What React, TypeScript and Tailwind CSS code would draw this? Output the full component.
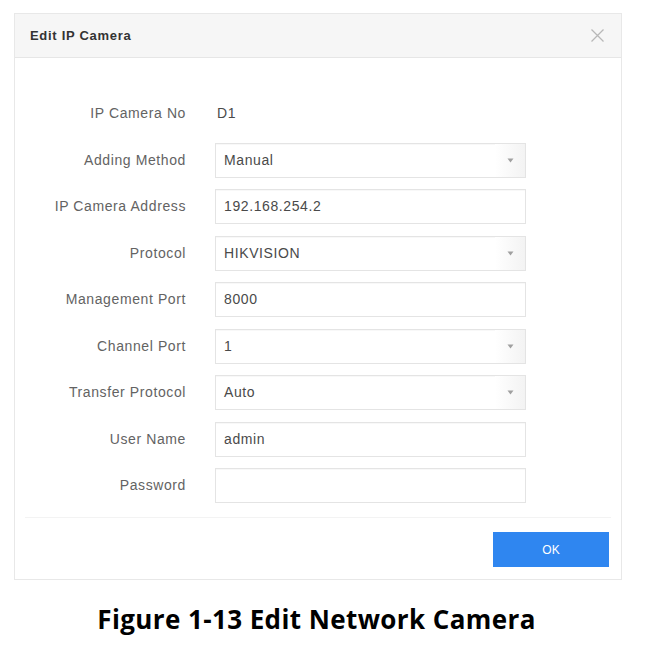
import React from 'react';

type Field = {
  label: string;
  value: string;
  kind: 'text' | 'select' | 'input';
};

const FIELDS: Field[] = [
  { label: 'IP Camera No', value: 'D1', kind: 'text' },
  { label: 'Adding Method', value: 'Manual', kind: 'select' },
  { label: 'IP Camera Address', value: '192.168.254.2', kind: 'input' },
  { label: 'Protocol', value: 'HIKVISION', kind: 'select' },
  { label: 'Management Port', value: '8000', kind: 'input' },
  { label: 'Channel Port', value: '1', kind: 'select' },
  { label: 'Transfer Protocol', value: 'Auto', kind: 'select' },
  { label: 'User Name', value: 'admin', kind: 'input' },
  { label: 'Password', value: '', kind: 'input' },
];

const Caret = () => (
  <svg width="7" height="5" viewBox="0 0 7 5" className="text-[#a0a0a0]">
    <path d="M0.5 0.5 L6.5 0.5 L3.5 4.5 Z" fill="currentColor" />
  </svg>
);

const FieldControl: React.FC<{ field: Field }> = ({ field }) => {
  if (field.kind === 'text') {
    return <span className="text-[#4a4a4a] px-[2px]">{field.value}</span>;
  }
  return (
    <div className="w-[311px] h-[35px] border border-[#e4e4e4] bg-white flex items-center shadow-[inset_0_1px_1px_rgba(0,0,0,0.03)]">
      <span className="flex-1 pl-[8px] text-[#4a4a4a]">{field.value}</span>
      {field.kind === 'select' && (
        <div className="h-full w-[30px] flex items-center justify-center bg-gradient-to-r from-white to-[#f3f3f3]">
          <Caret />
        </div>
      )}
    </div>
  );
};

export default function App() {
  return (
    <div className="w-[650px] h-[647px] bg-white font-['Liberation_Sans',Arial,sans-serif]">
      <div className="pt-[13px] pl-[14px]">
        <div className="w-[608px] border border-[#e8e8e8] bg-white">
          {/* header */}
          <div className="h-[44px] bg-[#f6f6f6] border-b border-[#e6e6e6] flex items-center justify-between pl-[15px] pr-[16px]">
            <span className="text-[13px] font-bold text-[#333] tracking-[0.7px]">Edit IP Camera</span>
            <svg width="15" height="15" viewBox="0 0 15 15">
              <path d="M1.5 1.5 L13.5 13.5 M13.5 1.5 L1.5 13.5" stroke="#b8b8b8" strokeWidth="1.3" />
            </svg>
          </div>

          {/* form */}
          <div className="pt-[38px] flex flex-col gap-[11.5px] text-[14px] tracking-[0.6px]">
            {FIELDS.map((f) => (
              <div key={f.label} className="h-[35px] flex items-center">
                <div className="w-[171px] text-right text-[#636363]">{f.label}</div>
                <div className="ml-[29px]">
                  <FieldControl field={f} />
                </div>
              </div>
            ))}
          </div>

          {/* footer */}
          <div className="mt-[14px] mx-[10px] border-t border-[#f3f3f3] pt-[14px] pb-[12px] flex justify-end">
            <button className="w-[116px] h-[35px] bg-[#2f86f0] text-white text-[12px] mr-[2px]">OK</button>
          </div>
        </div>
      </div>

      <div className="mt-[26px] pr-[17px] text-center font-['Open_Sans',sans-serif] font-bold text-[26px] tracking-[0.4px] text-black leading-none">
        Figure 1-13 Edit Network Camera
      </div>
    </div>
  );
}
